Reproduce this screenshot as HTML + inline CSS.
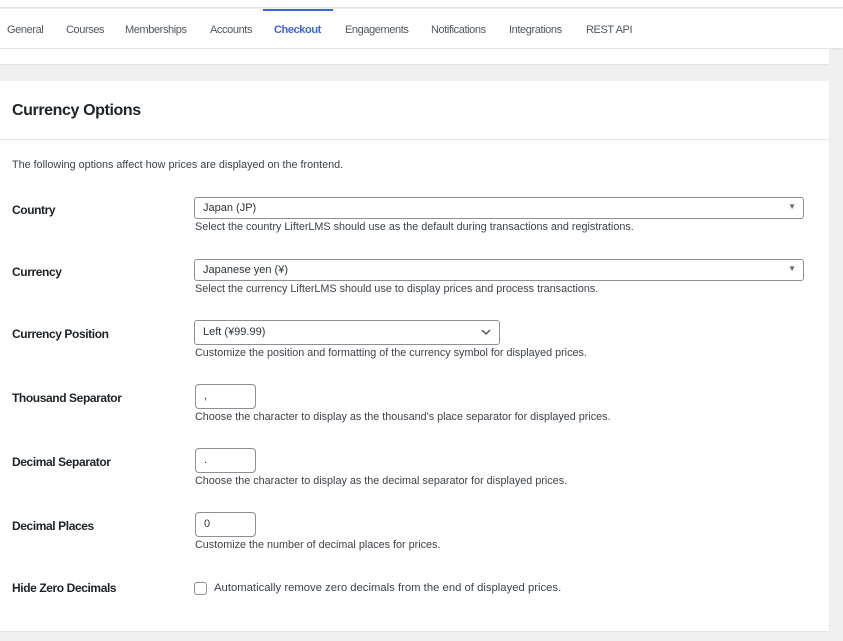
<!DOCTYPE html>
<html><head><meta charset="utf-8"><style>
*{box-sizing:border-box;margin:0;padding:0}
body{width:843px;height:641px;background:#f0f0f1;font-family:"Liberation Sans",sans-serif;color:#1d2327;position:relative;overflow:hidden}
.a{position:absolute;white-space:nowrap}
.top{position:absolute;left:0;top:0;width:843px;height:8px;background:#fff;border-bottom:1px solid #e2e4e7}
.nav{position:absolute;left:0;top:9px;width:843px;height:39px;background:#fff;box-shadow:0 1px 2px rgba(0,0,0,.08)}
.nav span{position:absolute;top:15px;font-size:11px;color:#50575e;letter-spacing:-.4px}
.panel0{position:absolute;left:0;top:49px;width:829px;height:15px;background:#fff;box-shadow:0 1px 1px rgba(0,0,0,.06)}
.card{position:absolute;left:0;top:81px;width:829px;height:550px;background:#fff;box-shadow:0 1px 1px rgba(0,0,0,.06)}
.lbl{font-size:12px;font-weight:bold;color:#1d2327;letter-spacing:-.4px;left:12px}
.desc{font-size:10.8px;color:#3c434a;letter-spacing:0;left:195px}
.sel{position:absolute;left:194px;height:22px;border:1px solid #8c8f94;border-radius:3px;background:#fff;font-size:11px;padding:4px 8px;color:#2c3338}
.inp{position:absolute;left:195px;width:61px;height:25px;border:1px solid #8c8f94;border-radius:4px;background:#fff;font-size:11px;padding:5px 8px;color:#2c3338}
</style></head><body>
<div class="top"></div>
<div class="nav">
<span style="left:7px">General</span>
<span style="left:66px">Courses</span>
<span style="left:125px">Memberships</span>
<span style="left:210px">Accounts</span>
<span style="left:274px;font-weight:bold;color:#3a64d8">Checkout</span>
<div style="position:absolute;left:263px;top:0;width:70px;height:2px;background:#3a64d8"></div>
<span style="left:345px">Engagements</span>
<span style="left:431px">Notifications</span>
<span style="left:509px">Integrations</span>
<span style="left:586px">REST API</span>
</div>
<div class="panel0"></div>
<div class="card">
<div class="a" style="left:12px;top:21px;font-size:16px;font-weight:bold;letter-spacing:-.4px">Currency Options</div>
<div style="position:absolute;left:0;top:58px;width:829px;height:1px;background:#e6e7e8"></div>
<div class="a" style="left:12px;top:78px;font-size:10.8px;color:#3c434a">The following options affect how prices are displayed on the frontend.</div>
</div>
<div class="a lbl" style="top:203px">Country</div>
<div class="sel" style="top:197px;width:610px">Japan (JP)<span style="position:absolute;right:7px;top:4px;font-size:8px;color:#666">▼</span></div>
<div class="a desc" style="top:221px">Select the country LifterLMS should use as the default during transactions and registrations.</div>
<div class="a lbl" style="top:265px">Currency</div>
<div class="sel" style="top:259px;width:610px">Japanese yen (¥)<span style="position:absolute;right:7px;top:4px;font-size:8px;color:#666">▼</span></div>
<div class="a desc" style="top:283px">Select the currency LifterLMS should use to display prices and process transactions.</div>
<div class="a lbl" style="top:327px">Currency Position</div>
<div class="sel" style="top:320px;width:306px;height:25px;left:194px;padding-top:5px">Left (¥99.99)<svg style="position:absolute;right:8px;top:8px" width="10" height="7"><path d="M1 1l4 4 4-4" stroke="#50575e" stroke-width="1.5" fill="none"/></svg></div>
<div class="a desc" style="top:347px">Customize the position and formatting of the currency symbol for displayed prices.</div>
<div class="a lbl" style="top:391px">Thousand Separator</div>
<div class="inp" style="top:384px">,</div>
<div class="a desc" style="top:411px">Choose the character to display as the thousand's place separator for displayed prices.</div>
<div class="a lbl" style="top:455px">Decimal Separator</div>
<div class="inp" style="top:448px">.</div>
<div class="a desc" style="top:475px">Choose the character to display as the decimal separator for displayed prices.</div>
<div class="a lbl" style="top:519px">Decimal Places</div>
<div class="inp" style="top:512px">0</div>
<div class="a desc" style="top:539px">Customize the number of decimal places for prices.</div>
<div class="a lbl" style="top:581px">Hide Zero Decimals</div>
<div style="position:absolute;left:194px;top:582px;width:13px;height:13px;border:1px solid #8c8f94;border-radius:3px;background:#fff"></div>
<div class="a" style="left:214px;top:582px;font-size:11.3px;color:#3c434a">Automatically remove zero decimals from the end of displayed prices.</div>
</body></html>
